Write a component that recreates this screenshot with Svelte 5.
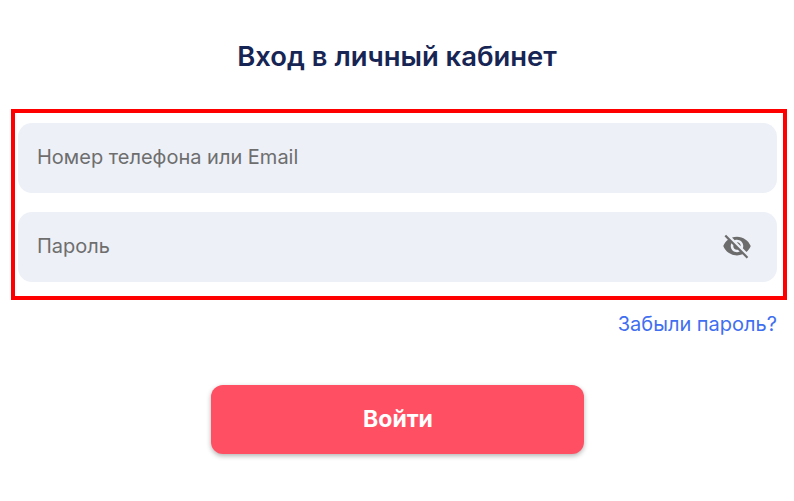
<script>
  let showPassword = $state(false);
</script>

<main>
  <h1>Вход в личный кабинет</h1>

  <div class="fields">
    <input type="text" placeholder="Номер телефона или Email" />
    <div class="password">
      <input type={showPassword ? 'text' : 'password'} placeholder="Пароль" />
      <button class="eye" type="button" aria-label="Показать пароль" onclick={() => (showPassword = !showPassword)}>
        <svg viewBox="0 0 24 24" width="30" height="30" fill="#6c6c6c">
          <path d="M12 7c2.76 0 5 2.24 5 5 0 .65-.13 1.26-.36 1.83l2.92 2.92c1.51-1.26 2.7-2.89 3.43-4.75-1.73-4.39-6-7.5-11-7.5-1.4 0-2.74.25-3.98.7l2.16 2.16C10.74 7.13 11.35 7 12 7zM2 4.27l2.28 2.28.46.46C3.08 8.3 1.78 10.02 1 12c1.73 4.39 6 7.5 11 7.5 1.55 0 3.03-.3 4.38-.84l.42.42L19.73 22 21 20.73 3.27 3 2 4.27zM7.53 9.8l1.55 1.55c-.05.21-.08.43-.08.65 0 1.66 1.34 3 3 3 .22 0 .44-.03.65-.08l1.55 1.55c-.67.33-1.41.53-2.2.53-2.76 0-5-2.24-5-5 0-.79.2-1.53.53-2.2zm4.31-.78l3.15 3.15.02-.16c0-1.66-1.34-3-3-3l-.17.01z"/>
        </svg>
      </button>
    </div>
  </div>

  <div class="forgot"><a href="#forgot">Забыли пароль?</a></div>

  <button class="submit" type="button">Войти</button>
</main>

<style>
  :global(body) {
    background: #fff;
  }

  main {
    height: 501px;
    box-sizing: border-box;
    padding-top: 40px;
    font-family: Inter, "Noto Sans", sans-serif;
    display: flex;
    flex-direction: column;
  }

  h1 {
    margin: 0;
    font-size: 27.4px;
    line-height: 32px;
    font-weight: 600;
    color: #172554;
    text-align: center;
  }

  .fields {
    margin: 37px 7px 0 11px;
    border: 4px solid #fe0000;
    padding: 10px 6px 14px 3px;
    display: flex;
    flex-direction: column;
    gap: 19px;
  }

  input {
    display: block;
    width: 100%;
    height: 70px;
    box-sizing: border-box;
    border: none;
    outline: none;
    border-radius: 14px;
    background: #edf0f7;
    padding: 0 19px 2px;
    font-family: inherit;
    font-size: 20px;
    color: #333;
  }

  input::placeholder {
    color: #6e6e6e;
    opacity: 1;
  }

  .password {
    position: relative;
  }

  .eye {
    position: absolute;
    right: 25px;
    top: 19px;
    padding: 0;
    border: none;
    background: none;
    display: flex;
    cursor: pointer;
  }

  .forgot {
    margin-top: 12px;
    padding-right: 17px;
    text-align: right;
    font-size: 20px;
    line-height: 24px;
  }

  .forgot a {
    color: #3f6ff0;
    text-decoration: none;
  }

  .submit {
    align-self: center;
    margin-top: 49px;
    width: 373px;
    height: 69px;
    padding: 0 0 2px 2px;
    border: none;
    border-radius: 12px;
    background: #ff5063;
    color: #fff;
    font-family: inherit;
    font-size: 23px;
    font-weight: 700;
    box-shadow: 0 2px 5px rgba(0, 0, 0, 0.3);
    cursor: pointer;
  }
</style>
